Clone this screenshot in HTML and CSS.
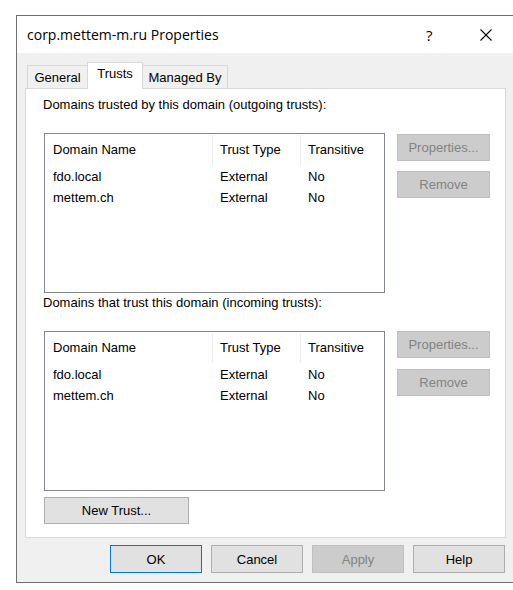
FILE: index.html
```html
<!DOCTYPE html>
<html lang="en">
<head>
    <meta charset="UTF-8">
    <title>corp.mettem-m.ru Properties</title>
    <link rel="stylesheet" href="styles.css">
</head>
<body>
    <div class="window">
        <div class="titlebar">
            <span class="title">corp.mettem-m.ru Properties</span>
            <span class="help-btn">?</span>
            <span class="close-btn">
                <svg width="12" height="12" viewBox="0 0 12 12">
                    <path d="M0.5 0.5 L11.5 11.5 M11.5 0.5 L0.5 11.5" stroke="#000" stroke-width="1.1" fill="none"/>
                </svg>
            </span>
        </div>
        <div class="content">
            <div class="tabs">
                <div class="tab tab-general">General</div>
                <div class="tab active">Trusts</div>
                <div class="tab tab-managed">Managed By</div>
            </div>
            <div class="panel">
                <div class="label">Domains trusted by this domain (outgoing trusts):</div>
                <div class="group">
                    <div class="list">
                        <div class="list-head">
                            <div class="cell">Domain Name</div>
                            <div class="cell">Trust Type</div>
                            <div class="cell">Transitive</div>
                        </div>
                        <div class="list-row">
                            <div class="cell">fdo.local</div>
                            <div class="cell">External</div>
                            <div class="cell">No</div>
                        </div>
                        <div class="list-row">
                            <div class="cell">mettem.ch</div>
                            <div class="cell">External</div>
                            <div class="cell">No</div>
                        </div>
                    </div>
                    <div class="side">
                        <button class="btn" disabled>Properties...</button>
                        <button class="btn" disabled>Remove</button>
                    </div>
                </div>

                <div class="label label-second">Domains that trust this domain (incoming trusts):</div>
                <div class="group">
                    <div class="list">
                        <div class="list-head">
                            <div class="cell">Domain Name</div>
                            <div class="cell">Trust Type</div>
                            <div class="cell">Transitive</div>
                        </div>
                        <div class="list-row">
                            <div class="cell">fdo.local</div>
                            <div class="cell">External</div>
                            <div class="cell">No</div>
                        </div>
                        <div class="list-row">
                            <div class="cell">mettem.ch</div>
                            <div class="cell">External</div>
                            <div class="cell">No</div>
                        </div>
                    </div>
                    <div class="side side-second">
                        <button class="btn" disabled>Properties...</button>
                        <button class="btn" disabled>Remove</button>
                    </div>
                </div>

                <button class="btn new-trust">New Trust...</button>
            </div>
            <div class="footer">
                <button class="btn default">OK</button>
                <button class="btn">Cancel</button>
                <button class="btn" disabled>Apply</button>
                <button class="btn">Help</button>
            </div>
        </div>
    </div>
</body>
</html>
```

FILE: styles.css
```css
body {
    margin: 0;
    background: #fff;
    font-family: "Liberation Sans", Arial, sans-serif;
    font-size: 13px;
    color: #000;
    overflow: hidden;
}
.window {
    margin: 15px 0 0 16px;
    width: 510px;
    border: 1px solid #707070;
    background: #f0f0f0;
}
.titlebar {
    height: 37px;
    background: #fff;
    display: flex;
    align-items: center;
    padding-left: 10px;
}
.title {
    font-family: "Open Sans", sans-serif;
    font-size: 14px;
    flex: 1;
}
.help-btn {
    font-family: "Open Sans", sans-serif;
    font-size: 15px;
    width: 54px;
}
.close-btn {
    width: 47px;
    display: flex;
    align-items: center;
}
.content {
    padding: 9px 0 9px 8px;
}
.tabs {
    display: flex;
    align-items: flex-end;
    height: 26px;
    margin-left: 2px;
}
.tab {
    box-sizing: border-box;
    height: 23px;
    line-height: 23px;
    border: 1px solid #d9d9d9;
    border-bottom: none;
    background: #f0f0f0;
    text-align: center;
}
.tab-general {
    width: 60px;
    border-right: none;
}
.tab.active {
    width: 56px;
    height: 27px;
    line-height: 22px;
    margin-bottom: -1px;
    background: #fff;
    position: relative;
}
.tab-managed {
    width: 85px;
    border-left: none;
}
.panel {
    box-sizing: border-box;
    width: 481px;
    height: 450px;
    border: 1px solid #d9d9d9;
    background: #fff;
    padding: 8px 0 0 17px;
}
.label {
    line-height: 16px;
}
.label-second {
    margin-top: 2px;
}
.group {
    display: flex;
    gap: 12px;
    margin-top: 20px;
}
.list {
    box-sizing: border-box;
    width: 341px;
    height: 160px;
    border: 1px solid #828790;
    margin-left: 1px;
}
.list-head,
.list-row {
    display: grid;
    grid-template-columns: 168px 88px 1fr;
}
.list-head {
    height: 32px;
    align-items: center;
}
.list-head .cell {
    line-height: 30px;
    border-right: 1px solid #ececec;
}
.list-head .cell:last-child {
    border-right: none;
}
.list-row {
    height: 21px;
    line-height: 21px;
}
.cell {
    padding-left: 8px;
}
.list-head .cell + .cell,
.list-row .cell + .cell {
    padding-left: 7px;
}
.side {
    display: flex;
    flex-direction: column;
    gap: 10px;
    padding-top: 1px;
}
.side-second {
    gap: 11px;
    padding-top: 0;
}
.btn {
    box-sizing: border-box;
    width: 93px;
    height: 27px;
    font-family: "Liberation Sans", Arial, sans-serif;
    font-size: 13px;
    color: #000;
    background: #e1e1e1;
    border: 1px solid #adadad;
    padding: 0;
}
.btn:disabled {
    background: #cccccc;
    border-color: #bfbfbf;
    color: #838383;
}
.new-trust {
    display: block;
    width: 145px;
    margin: 6px 0 0 1px;
}
.footer {
    display: flex;
    gap: 9px;
    margin: 7px 0 0 85px;
}
.footer .btn {
    width: 92px;
    height: 28px;
}
.footer .default {
    border: 1px solid #0078d7;
}
```
